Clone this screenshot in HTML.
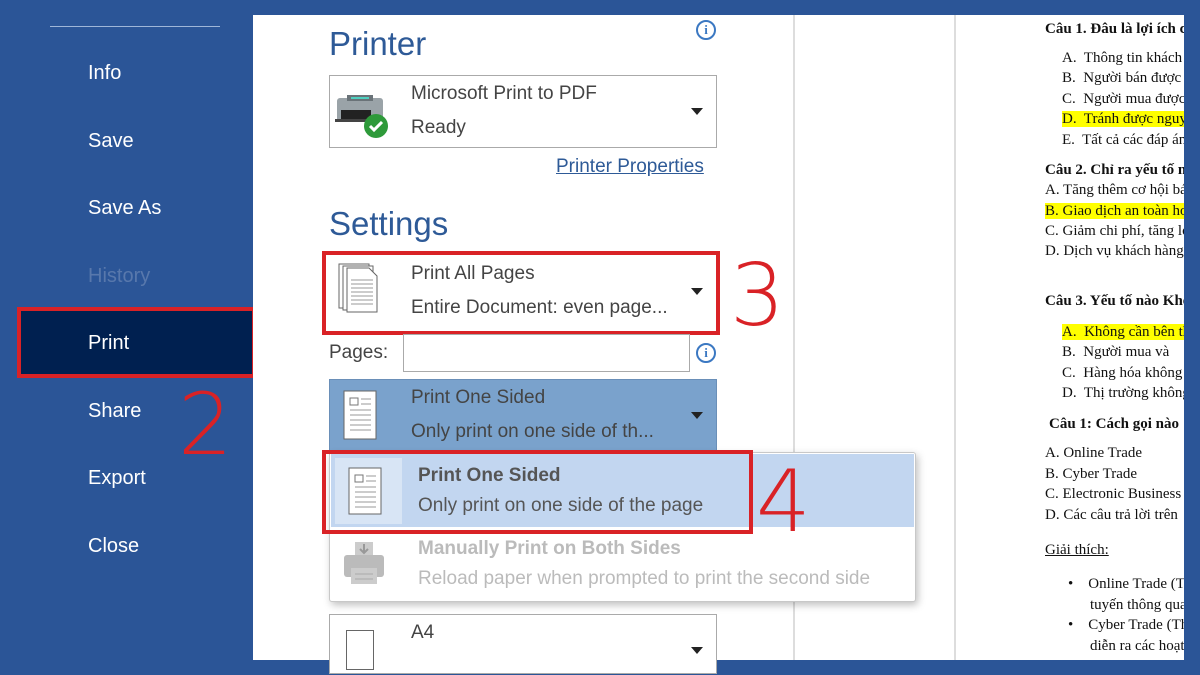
<!DOCTYPE html>
<html><head><meta charset="utf-8"><style>
*{margin:0;padding:0;box-sizing:border-box}
body{width:1200px;height:675px;background:#2b5597;position:relative;overflow:hidden;font-family:"Segoe UI","Liberation Sans","DejaVu Sans",sans-serif}
.a{position:absolute}
.nav{color:#fff;font-size:20px;left:88px}
.main{left:253px;top:15px;width:931px;height:645px;background:#fff}
.t{color:#444;font-size:19px}
.h{color:#2e5a97;font-size:33px}
.box{border:1px solid #aaa;background:#fff}
.red{border:4px solid #d92226}
.num{color:#d92226;font-size:86px;font-family:"DejaVu Sans",sans-serif;font-weight:200;line-height:1}
.arr{width:0;height:0;border-left:6px solid transparent;border-right:6px solid transparent;border-top:7px solid #222}
.doc{position:absolute;font-family:"Liberation Serif",serif;font-size:15px;color:#111;line-height:18px;white-space:nowrap}
.hl{background:#ffff00}
.info{width:20px;height:20px;border:2px solid #3b78c2;border-radius:50%;color:#3b78c2;font-size:13px;font-weight:bold;text-align:center;line-height:16px;font-family:"Liberation Serif",serif}
#clip{position:absolute;left:1040px;top:0;width:144px;height:660px;overflow:hidden}
</style></head><body>
<div class="a" style="left:50px;top:26px;width:170px;height:1px;background:#9fb6d8"></div>
<div class="a nav" style="top:62px">Info</div>
<div class="a nav" style="top:130px">Save</div>
<div class="a nav" style="top:197px">Save As</div>
<div class="a nav" style="top:265px;color:#5878ac">History</div>
<div class="a" style="left:17px;top:307px;width:239px;height:71px;background:#002050;border:4px solid #d92226"></div>
<div class="a nav" style="top:332px">Print</div>
<div class="a nav" style="top:400px">Share</div>
<div class="a num" style="left:178px;top:382px">2</div>
<div class="a nav" style="top:467px">Export</div>
<div class="a nav" style="top:535px">Close</div>

<div class="a main"></div>
<div class="a" style="left:793px;top:15px;width:2px;height:645px;background:#ddd"></div>
<div class="a" style="left:954px;top:15px;width:2px;height:645px;background:#ddd"></div>

<div class="a h" style="left:329px;top:25px">Printer</div>
<div class="a info" style="left:696px;top:20px">i</div>
<div class="a box" style="left:329px;top:75px;width:388px;height:73px"></div>
<svg class="a" style="left:335px;top:92px" width="58" height="48" viewBox="0 0 58 48">
<rect x="2" y="6" width="46" height="24" rx="3" fill="#9aa3a8"/><rect x="12" y="3" width="26" height="6" fill="#6a7378"/><rect x="16" y="5" width="18" height="2" fill="#4fd0c0"/>
<rect x="6" y="18" width="30" height="9" fill="#222"/><rect x="0" y="27" width="40" height="3" fill="#444"/>
<circle cx="41" cy="34" r="12" fill="#2e9a3a"/><path d="M35 34l4 4 8-8" stroke="#fff" stroke-width="3" fill="none"/></svg>
<div class="a t" style="left:411px;top:83px">Microsoft Print to PDF</div>
<div class="a t" style="left:411px;top:117px">Ready</div>
<div class="a arr" style="left:691px;top:108px"></div>
<div class="a" style="left:556px;top:156px;color:#2e5a97;font-size:19px;text-decoration:underline">Printer Properties</div>

<div class="a h" style="left:329px;top:205px">Settings</div>
<div class="a red" style="left:322px;top:251px;width:398px;height:84px"></div>
<svg class="a" style="left:337px;top:262px" width="46" height="52"><g fill="#fff" stroke="#666"><rect x="2" y="2" width="30" height="44"/><rect x="6" y="4" width="30" height="44"/><path d="M10 6h22l8 8v36H10z"/></g><g stroke="#999"><path d="M14 18h22M14 22h22M14 26h22M14 30h22M14 34h22M14 38h22M14 42h22"/></g></svg>
<div class="a t" style="left:411px;top:263px">Print All Pages</div>
<div class="a t" style="left:411px;top:297px">Entire Document: even page...</div>
<div class="a arr" style="left:691px;top:288px"></div>
<div class="a num" style="left:730px;top:253px">3</div>

<div class="a t" style="left:329px;top:342px">Pages:</div>
<div class="a box" style="left:403px;top:334px;width:287px;height:38px"></div>
<div class="a info" style="left:696px;top:343px">i</div>

<div class="a" style="left:329px;top:379px;width:388px;height:170px;background:#7aa2cc;border:1px solid #6a8fb8"></div>
<svg class="a" style="left:343px;top:390px" width="36" height="52"><rect x="1" y="1" width="32" height="48" fill="#fff" stroke="#666"/><rect x="7" y="8" width="8" height="7" fill="none" stroke="#777"/><g stroke="#999"><path d="M18 9h10M18 14h10M7 20h21M7 25h21M7 30h21M7 35h21M7 40h21"/></g></svg>
<div class="a t" style="left:411px;top:387px">Print One Sided</div>
<div class="a t" style="left:411px;top:421px">Only print on one side of th...</div>
<div class="a arr" style="left:691px;top:412px"></div>

<div class="a" style="left:329px;top:452px;width:587px;height:150px;background:#fff;border:1px solid #c8c8c8;border-radius:3px;box-shadow:2px 3px 8px rgba(0,0,0,.25)"></div>
<div class="a" style="left:331px;top:454px;width:583px;height:73px;background:#c2d6f0"></div>
<div class="a" style="left:335px;top:458px;width:67px;height:66px;background:#d8e5f5"></div>
<svg class="a" style="left:348px;top:467px" width="36" height="52"><rect x="1" y="1" width="32" height="46" fill="#fff" stroke="#666"/><rect x="7" y="8" width="8" height="7" fill="none" stroke="#777"/><g stroke="#999"><path d="M18 9h10M18 14h10M7 20h21M7 25h21M7 30h21M7 35h21M7 40h21"/></g></svg>
<div class="a t" style="left:418px;top:465px;font-weight:bold;color:#555">Print One Sided</div>
<div class="a t" style="left:418px;top:495px;color:#555">Only print on one side of the page</div>
<div class="a red" style="left:322px;top:450px;width:431px;height:84px"></div>
<div class="a num" style="left:756px;top:459px">4</div>
<svg class="a" style="left:343px;top:540px" width="42" height="46"><rect x="12" y="2" width="18" height="14" fill="#ccc"/><path d="M21 4v8M17 9l4 4 4-4" stroke="#999" stroke-width="2" fill="none"/><rect x="1" y="15" width="40" height="22" rx="3" fill="#bbb"/><rect x="8" y="28" width="26" height="16" fill="#ccc"/><path d="M12 34h18M12 39h18" stroke="#aaa"/></svg>
<div class="a t" style="left:418px;top:538px;font-weight:bold;color:#bbb">Manually Print on Both Sides</div>
<div class="a t" style="left:418px;top:568px;color:#bbb">Reload paper when prompted to print the second side</div>
<div class="a box" style="left:329px;top:614px;width:388px;height:60px"></div>
<div class="a" style="left:346px;top:630px;width:28px;height:40px;border:1px solid #666"></div>
<div class="a t" style="left:411px;top:622px">A4</div>
<div class="a arr" style="left:691px;top:647px"></div>

<div id="clip">
<div class="doc" style="left:5px;top:20px"><b>Câu 1. Đâu là lợi ích của</b></div>
<div class="doc" style="left:22px;top:49px">A.&nbsp; Thông tin khách hàng</div>
<div class="doc" style="left:22px;top:69px">B.&nbsp; Người bán được</div>
<div class="doc" style="left:22px;top:90px">C.&nbsp; Người mua được</div>
<div class="doc" style="left:22px;top:110px"><span class="hl">D.&nbsp; Tránh được nguy cơ</span></div>
<div class="doc" style="left:22px;top:131px">E.&nbsp; Tất cả các đáp án</div>
<div class="doc" style="left:5px;top:161px"><b>Câu 2. Chỉ ra yếu tố nào</b></div>
<div class="doc" style="left:5px;top:181px">A. Tăng thêm cơ hội bán</div>
<div class="doc" style="left:5px;top:202px"><span class="hl">B. Giao dịch an toàn hơn</span></div>
<div class="doc" style="left:5px;top:222px">C. Giảm chi phí, tăng lợi</div>
<div class="doc" style="left:5px;top:242px">D. Dịch vụ khách hàng</div>
<div class="doc" style="left:5px;top:292px"><b>Câu 3. Yếu tố nào Không</b></div>
<div class="doc" style="left:22px;top:323px"><span class="hl">A.&nbsp; Không cần bên thứ</span></div>
<div class="doc" style="left:22px;top:343px">B.&nbsp; Người mua và</div>
<div class="doc" style="left:22px;top:364px">C.&nbsp; Hàng hóa không</div>
<div class="doc" style="left:22px;top:384px">D.&nbsp; Thị trường không</div>
<div class="doc" style="left:9px;top:415px"><b>Câu 1: Cách gọi nào</b></div>
<div class="doc" style="left:5px;top:444px">A. Online Trade</div>
<div class="doc" style="left:5px;top:465px">B. Cyber Trade</div>
<div class="doc" style="left:5px;top:485px">C. Electronic Business</div>
<div class="doc" style="left:5px;top:506px">D. Các câu trả lời trên</div>
<div class="doc" style="left:5px;top:541px"><u>Giải thích:</u></div>
<div class="doc" style="left:28px;top:575px">•&nbsp;&nbsp;&nbsp; Online Trade (Thương</div>
<div class="doc" style="left:50px;top:596px">tuyến thông qua</div>
<div class="doc" style="left:28px;top:616px">•&nbsp;&nbsp;&nbsp; Cyber Trade (Thương</div>
<div class="doc" style="left:50px;top:637px">diễn ra các hoạt</div>
</div>
</body></html>
